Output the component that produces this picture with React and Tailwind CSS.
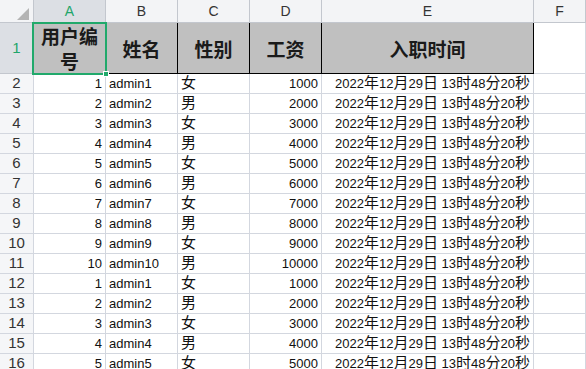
import React from 'react';

const COLS = ['A', 'B', 'C', 'D', 'E', 'F'];

const rows = [];
for (let i = 0; i < 15; i++) {
  const n = (i % 10) + 1;
  rows.push({
    id: n,
    name: 'admin' + n,
    sex: n % 2 === 1 ? '女' : '男',
    pay: n * 1000,
  });
}

const DATE = '2022年12月29日 13时48分20秒';

function Mixed({ s }) {
  return (
    <span className="whitespace-pre">
      {s.split(/([\u4e00-\u9fff]+)/).map((part, i) =>
        /[\u4e00-\u9fff]/.test(part) ? (
          <span key={i} className="text-[15px]">{part}</span>
        ) : (
          <span key={i}>{part}</span>
        )
      )}
    </span>
  );
}

const line = 'border-r border-b border-[#d3d7df]';

export default function App() {
  return (
    <div className="relative w-[586px] h-[369px] overflow-hidden bg-white text-[#111] font-['Liberation_Sans','Noto_Sans_CJK_SC',sans-serif]">
      <div className="grid grid-cols-[34px_72px_72px_72px_72px_212px_1fr] grid-rows-[23px_51px]">
        {/* corner */}
        <div className="border-r border-b border-[#c3c7ce] bg-[#f3f4f6] flex items-end justify-end pr-[4px] pb-[2px]">
          <svg width="12" height="12" viewBox="0 0 12 12">
            <polygon points="12,0 12,12 0,12" fill="#b4b4b4" />
          </svg>
        </div>
        {COLS.map((c) => (
          <div
            key={c}
            className={
              'border-r border-b border-[#c3c7ce] flex items-center justify-center text-[14px] ' +
              (c === 'A' ? 'bg-[#dcdfe4] text-[#1fa66a]' : 'bg-[#f3f4f6] text-[#333]')
            }
          >
            {c}
          </div>
        ))}

        {/* header row */}
        <div className="border-r border-b border-[#c3c7ce] bg-[#dcdfe4] text-[#1fa66a] text-[15px] flex items-center justify-center">
          1
        </div>
        {['用户编号', '姓名', '性别', '工资', '入职时间'].map((h) => (
          <div
            key={h}
            className="bg-[#c0c0c0] border-r border-b border-black flex items-center justify-center text-center px-[4px] font-['Noto_Sans_CJK_SC',sans-serif] font-bold text-[19px] leading-[25px] text-[#1a1a1a]"
          >
            {h}
          </div>
        ))}
        <div className={line}></div>

        {rows.map((r, i) => (
          <React.Fragment key={i}>
            <div className={line + ' h-5 bg-[#f5f6f8] text-[15px] text-[#333] flex items-center justify-center'}>
              {i + 2}
            </div>
            <div className={line + ' h-5 flex items-center justify-end pr-[3px] text-[13px]'}>{r.id}</div>
            <div className={line + ' h-5 flex items-center pl-[3px] text-[13px]'}>{r.name}</div>
            <div className={line + ' h-5 flex items-center pl-[3px] text-[15px]'}>{r.sex}</div>
            <div className={line + ' h-5 flex items-center justify-end pr-[3px] text-[13px]'}>{r.pay}</div>
            <div className={line + ' h-5 flex items-center justify-end pr-[3px] text-[13px]'}>
              <Mixed s={DATE} />
            </div>
            <div className={line + ' h-5'}></div>
          </React.Fragment>
        ))}
      </div>

      {/* selection of A1 */}
      <div className="absolute left-[32px] top-[22px] w-[75px] h-[53px] border-2 border-[#21a96b]"></div>
      <div className="absolute left-[103px] top-[71px] w-[6px] h-[6px] bg-[#21a96b] border border-white"></div>
    </div>
  );
}
